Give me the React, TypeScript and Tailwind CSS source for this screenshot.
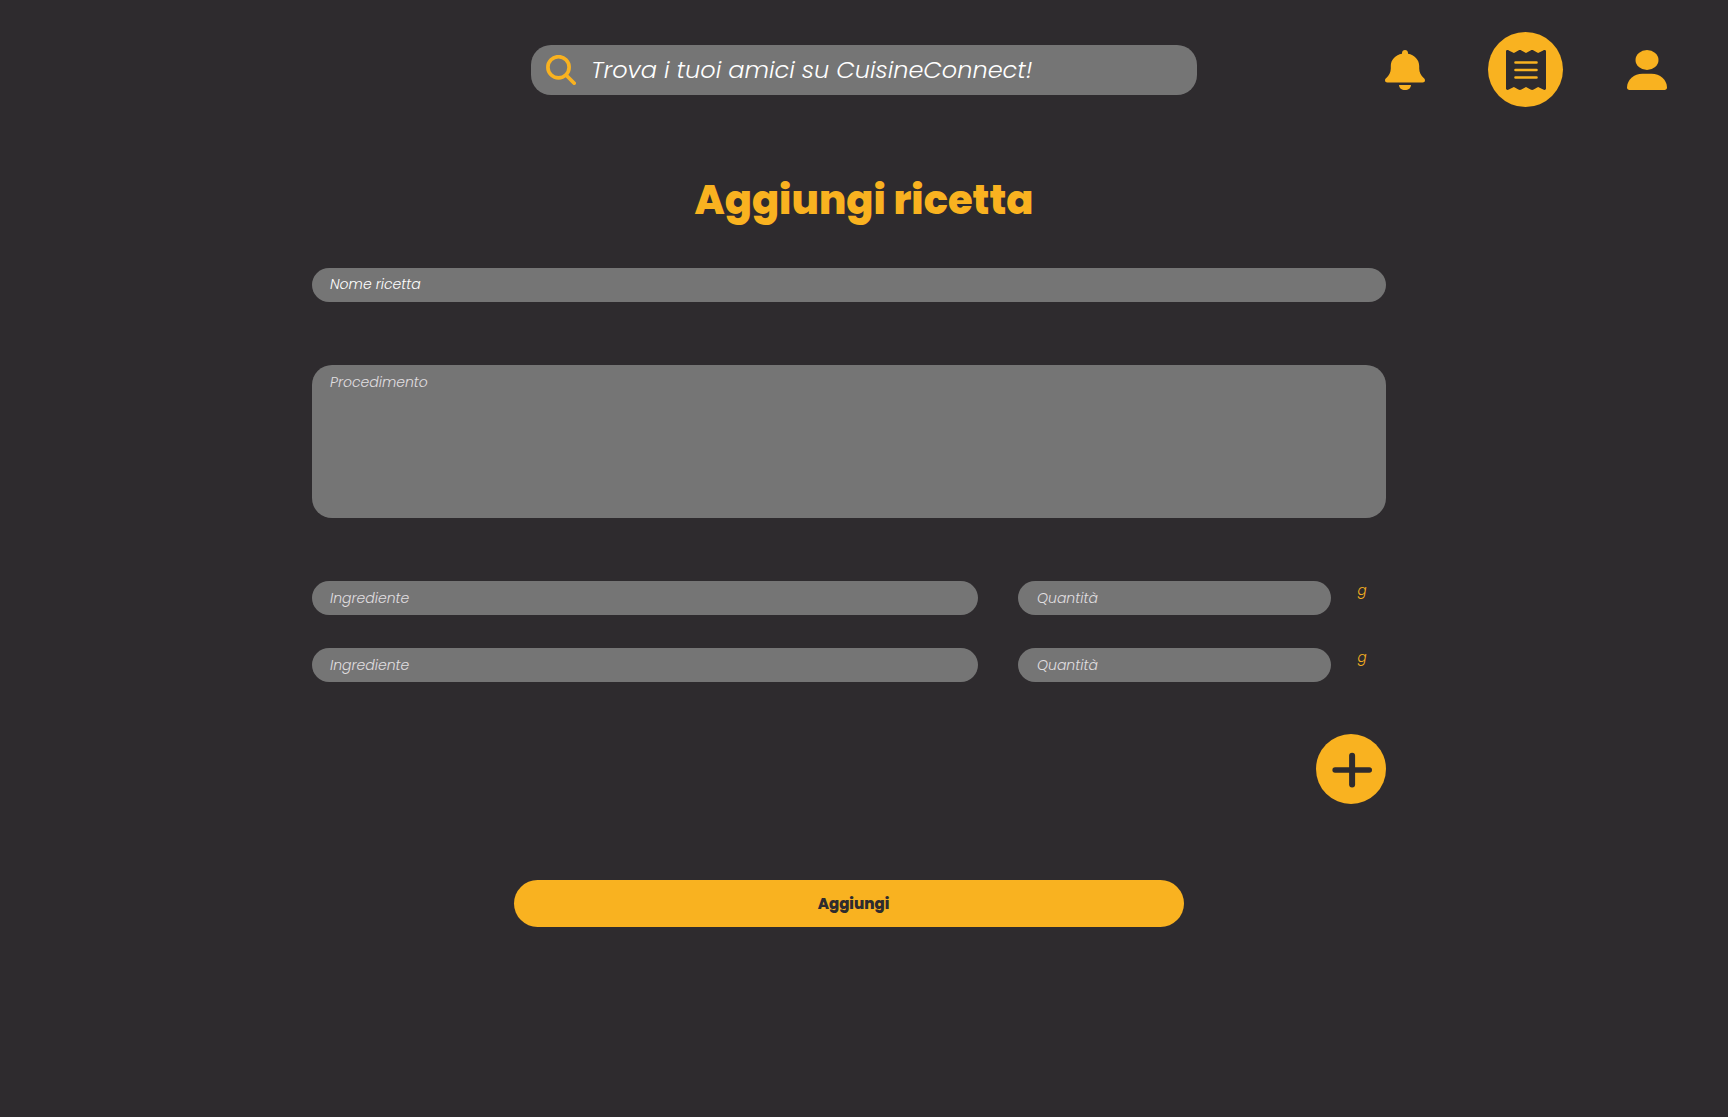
import type { ReactNode } from "react";

function SearchIcon() {
  return (
    <svg className="h-[30px] w-[30px] shrink-0" viewBox="0 0 30 30" fill="none" stroke="#f9b220" strokeLinecap="round">
      <circle cx="12.5" cy="12.3" r="10.6" strokeWidth="3.7" />
      <path d="M20.2 20.2L28.2 28.2" strokeWidth="3.7" />
    </svg>
  );
}

function BellIcon() {
  return (
    <svg className="h-10 w-10" viewBox="0 0 40 40" fill="#f9b220">
      <path d="M20 0C18.3 0 17 1.3 17 3V3.7C10.6 4.8 5.8 9.6 5.8 16V18.5C5.8 22.5 4 25.4 1.3 28C.5 28.8 0 29.4 0 30.3C0 31.6 1 32.6 2.3 32.6H37.7C39 32.6 40 31.6 40 30.3C40 29.4 39.5 28.8 38.7 28C36 25.4 34.2 22.5 34.2 18.5V16C34.2 9.6 29.4 4.8 23 3.7V3C23 1.3 21.7 0 20 0Z" />
      <path d="M14 35H26C26 38 23.3 40 20 40S14 38 14 35Z" />
    </svg>
  );
}

function ReceiptIcon() {
  return (
    <svg className="h-10 w-10" viewBox="0 0 40 40">
      <path
        fill="#2e2b2e"
        d="M0 1.4C0 .1 1.6-.4 2.8.4L7.9 3.1L12.4.5C13.4-.1 14.4-.1 15.4.5L20 3.1L24.6.5C25.6-.1 26.6-.1 27.6.5L32.1 3.1L37.2.4C38.4-.4 40 .1 40 1.4V38.6C40 39.9 38.4 40.4 37.2 39.6L32.1 36.9L27.6 39.5C26.6 40.1 25.6 40.1 24.6 39.5L20 36.9L15.4 39.5C14.4 40.1 13.4 40.1 12.4 39.5L7.9 36.9L2.8 39.6C1.6 40.4 0 39.9 0 38.6Z"
      />
      <path d="M9.5 12.5H30.5M9.5 20H30.5M9.5 27.5H30.5" stroke="#f9b220" strokeWidth="2.6" strokeLinecap="round" />
    </svg>
  );
}

function UserIcon() {
  return (
    <svg className="h-10 w-10" viewBox="0 0 40 40" fill="#f9b220">
      <ellipse cx="20" cy="10" rx="11.5" ry="10" />
      <path d="M15.5 23.8H24.5C33 23.8 40 30 40 37.5C40 39 39 40 37.5 40H2.5C1 40 0 39 0 37.5C0 30 7 23.8 15.5 23.8Z" />
    </svg>
  );
}

function Field({ label, className }: { label: ReactNode; className: string }) {
  return (
    <div className={`bg-[#757575] text-sm font-light italic ${className}`}>
      {label}
    </div>
  );
}

function IngredientRow() {
  return (
    <div className="flex h-[34px]">
      <Field label="Ingrediente" className="w-[665.5px] rounded-[17px] pl-[18px] leading-[34px] text-[#e0dfe0]" />
      <Field label="Quantità" className="ml-[40px] w-[313px] rounded-[17px] pl-[19.5px] leading-[34px] text-[#e0dfe0]" />
      <span className="ml-[27px] text-[13.5px] leading-[19px] font-light text-[#f9b220] italic">g</span>
    </div>
  );
}

export default function App() {
  return (
    <div className="flex h-[1117px] w-[1728px] flex-col overflow-hidden bg-[#2e2b2e] font-['Poppins','Inter',sans-serif]">
      <header className="flex h-[139px] items-start pt-8 pl-[531px]">
        <div className="mt-[13px] flex h-[50px] w-[666px] items-center rounded-[20px] bg-[#757575] pl-[15px]">
          <SearchIcon />
          <span className="ml-[15px] text-2xl font-light whitespace-nowrap text-white italic">
            Trova i tuoi amici su CuisineConnect!
          </span>
        </div>
        <nav className="ml-[188px] flex h-[75px] items-center">
          <BellIcon />
          <div className="ml-[63px] flex h-[75px] w-[75px] items-center justify-center rounded-full bg-[#f9b220]">
            <ReceiptIcon />
          </div>
          <div className="ml-16">
            <UserIcon />
          </div>
        </nav>
      </header>

      <h1 className="mt-[31px] text-center text-[40px] leading-[60px] font-extrabold text-[#f9b220]">Aggiungi ricetta</h1>

      <main className="ml-[312px] flex w-[1074px] flex-col">
        <Field label="Nome ricetta" className="mt-[38px] h-[34px] rounded-[17px] pl-[18px] leading-[32px] text-white" />
        <Field label="Procedimento" className="mt-[63px] h-[153px] rounded-[20px] pl-[18px] leading-[34px] text-[#e0dfe0]" />
        <div className="mt-[63px] flex flex-col gap-[33px]">
          <IngredientRow />
          <IngredientRow />
        </div>
        <button className="mt-[52px] flex h-[70px] w-[70px] items-center justify-center self-end rounded-full bg-[#f9b220]">
          <svg className="h-[70px] w-[70px]" viewBox="0 0 70 70" stroke="#2e2b2e" strokeLinecap="round">
            <path d="M19.1 36H53.3" strokeWidth="5.4" />
            <path d="M36.1 21.7V50.4" strokeWidth="6" />
          </svg>
        </button>
        <button className="mt-[76px] ml-[202px] h-[47px] w-[670px] rounded-full bg-[#f9b220] pt-[2px] pl-[9px] text-[15px] font-extrabold text-[#2e2b2e]">
          Aggiungi
        </button>
      </main>
    </div>
  );
}
